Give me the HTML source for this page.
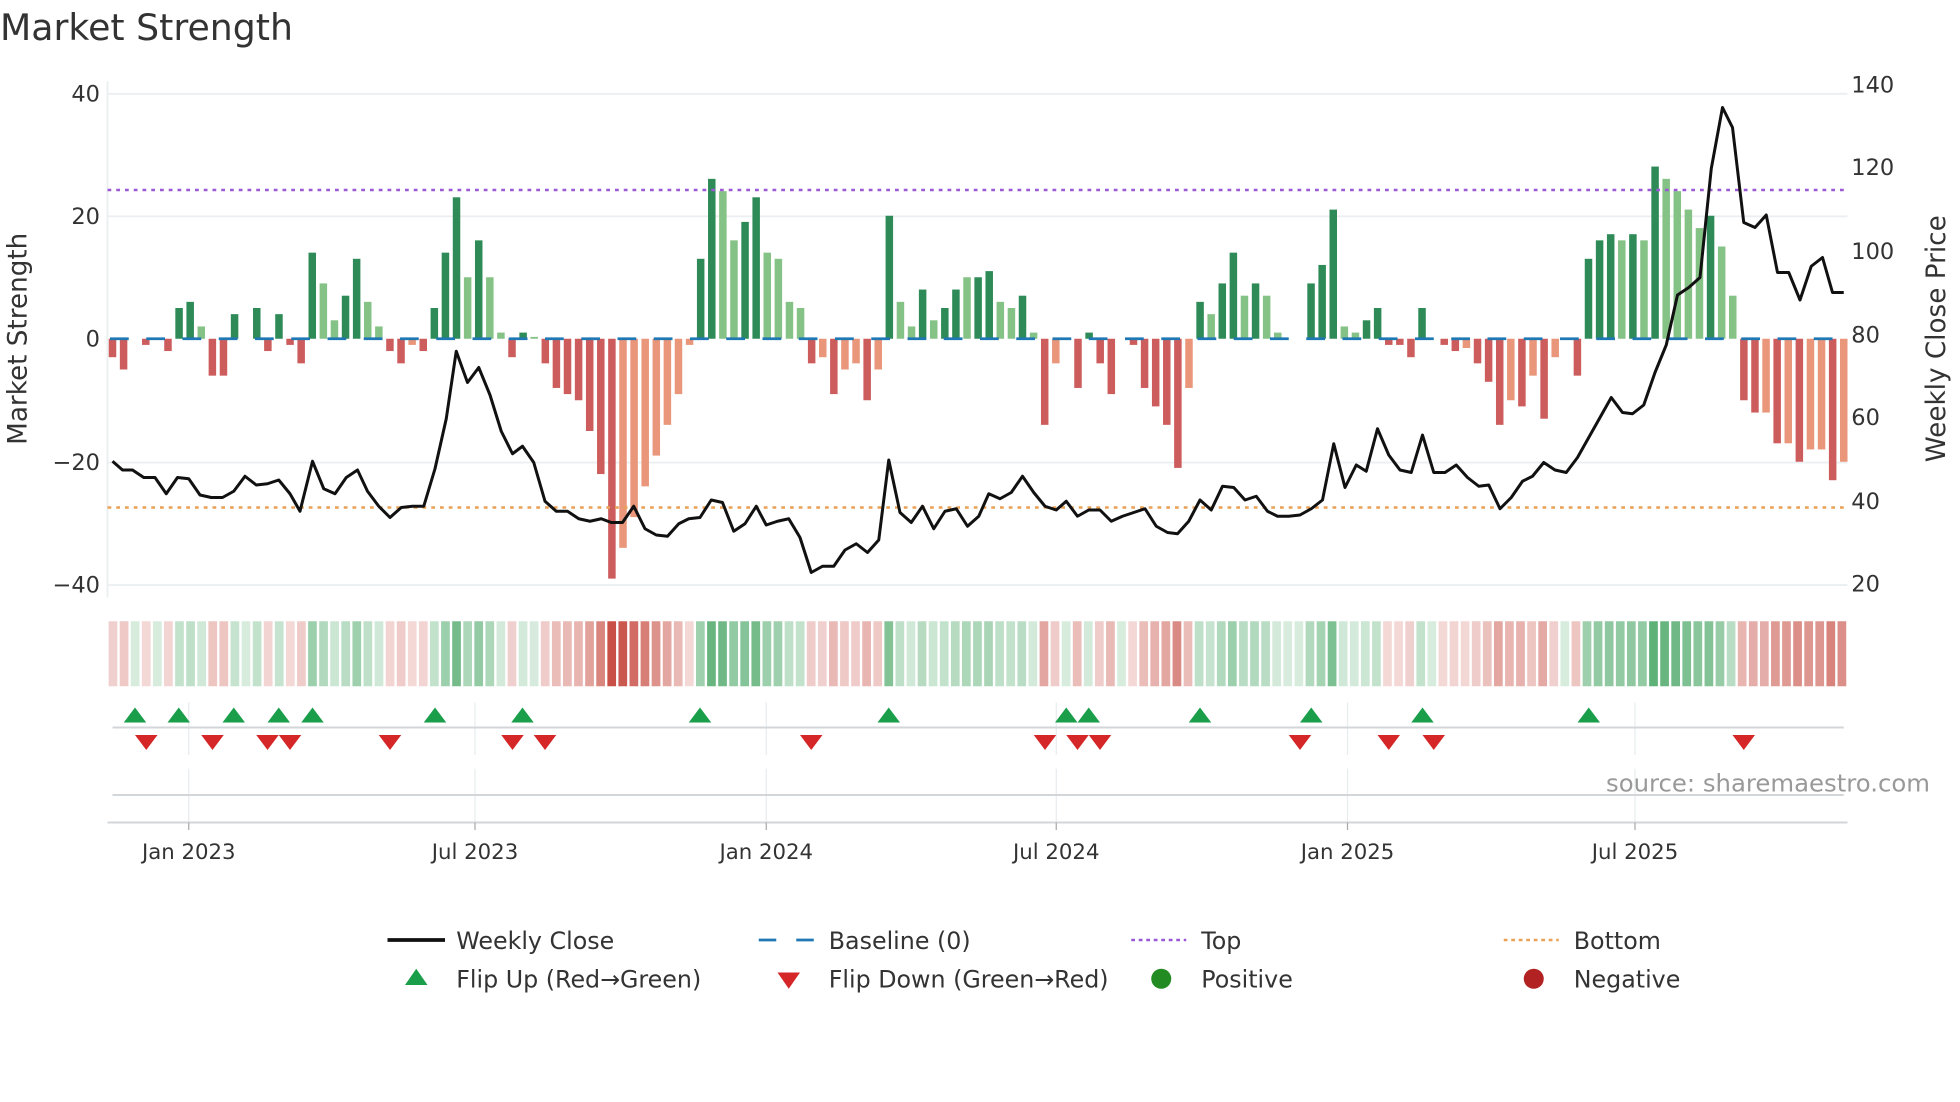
<!DOCTYPE html>
<html><head><meta charset="utf-8"><style>
html,body{margin:0;padding:0;background:#fff;width:1960px;height:1102px;overflow:hidden}
svg text{font-family:"DejaVu Sans","Liberation Sans",sans-serif;fill:#333}
</style></head><body>
<svg id="s" width="1960" height="1102" viewBox="0 0 1568 881.6" xmlns="http://www.w3.org/2000/svg">
<rect width="1568" height="882" fill="#fff"/>
<text x="0" y="32" font-size="29" fill="#333">Market Strength</text>
<g stroke="#eceff1" stroke-width="1.5">
<line x1="86" x2="1478" y1="75" y2="75"/><line x1="86" x2="1478" y1="173" y2="173"/>
<line x1="86" x2="1478" y1="370" y2="370"/><line x1="86" x2="1478" y1="468" y2="468"/>
<line x1="86" x2="86" y1="65" y2="478"/>
</g>
<g font-size="18" text-anchor="end">
<text x="80" y="81">40</text><text x="80" y="179">20</text><text x="80" y="277">0</text>
<text x="80" y="376">−20</text><text x="80" y="474">−40</text>
</g>
<g font-size="18">
<text x="1481" y="74">140</text><text x="1481" y="140">120</text><text x="1481" y="207">100</text>
<text x="1481" y="274">80</text><text x="1481" y="340">60</text><text x="1481" y="407">40</text><text x="1481" y="473">20</text>
</g>
<text transform="translate(21,271) rotate(-90)" font-size="21" text-anchor="middle">Market Strength</text>
<text transform="translate(1556,271) rotate(-90)" font-size="21" text-anchor="middle">Weekly Close Price</text>
<g id="bars"></g>
<line x1="88" x2="1478" y1="271" y2="271" stroke="#1f77b4" stroke-width="2.2" stroke-dasharray="15 14"/>
<line x1="86" x2="1478" y1="152" y2="152" stroke="#9b59d6" stroke-width="2" stroke-dasharray="3 4"/>
<line x1="86" x2="1478" y1="406" y2="406" stroke="#eaa055" stroke-width="2" stroke-dasharray="3 4"/>
<polyline id="price" fill="none" stroke="#111" stroke-width="2.4" stroke-linejoin="round"/>
<g id="strip"></g>
<g stroke="#e8ecef" stroke-width="1">
<line x1="151" x2="151" y1="562" y2="604"/><line x1="380" x2="380" y1="562" y2="604"/><line x1="613" x2="613" y1="562" y2="604"/>
<line x1="845" x2="845" y1="562" y2="604"/><line x1="1078" x2="1078" y1="562" y2="604"/><line x1="1308" x2="1308" y1="562" y2="604"/>
<line x1="151" x2="151" y1="615" y2="658"/><line x1="380" x2="380" y1="615" y2="658"/><line x1="613" x2="613" y1="615" y2="658"/>
<line x1="845" x2="845" y1="615" y2="658"/><line x1="1078" x2="1078" y1="615" y2="658"/><line x1="1308" x2="1308" y1="615" y2="658"/>
</g>
<line x1="90" x2="1475" y1="582" y2="582" stroke="#d3d6d9" stroke-width="1.6"/>
<line x1="90" x2="1475" y1="636" y2="636" stroke="#d3d6d9" stroke-width="1.6"/>
<line x1="86" x2="1478" y1="658" y2="658" stroke="#d3d6d9" stroke-width="1.6"/>
<g stroke="#aaa" stroke-width="1">
<line x1="151" x2="151" y1="658" y2="664"/><line x1="380" x2="380" y1="658" y2="664"/><line x1="613" x2="613" y1="658" y2="664"/>
<line x1="845" x2="845" y1="658" y2="664"/><line x1="1078" x2="1078" y1="658" y2="664"/><line x1="1308" x2="1308" y1="658" y2="664"/>
</g>
<g id="marks"></g>
<text x="1544" y="633" font-size="19.5" text-anchor="end" style="fill:#999">source: sharemaestro.com</text>
<g font-size="17" text-anchor="middle">
<text x="151" y="687">Jan 2023</text><text x="380" y="687">Jul 2023</text><text x="613" y="687">Jan 2024</text>
<text x="845" y="687">Jul 2024</text><text x="1078" y="687">Jan 2025</text><text x="1308" y="687">Jul 2025</text>
</g>
<g font-size="19">
<line x1="310" x2="356" y1="752" y2="752" stroke="#111" stroke-width="3"/><text x="365" y="759">Weekly Close</text>
<line x1="607" x2="651" y1="752" y2="752" stroke="#1f77b4" stroke-width="2.2" stroke-dasharray="14 16"/><text x="663" y="759">Baseline (0)</text>
<line x1="905" x2="949" y1="752" y2="752" stroke="#9b59d6" stroke-width="2" stroke-dasharray="3 3"/><text x="961" y="759">Top</text>
<line x1="1203" x2="1247" y1="752" y2="752" stroke="#eaa055" stroke-width="2" stroke-dasharray="3 3"/><text x="1259" y="759">Bottom</text>
<polygon points="324,788 342,788 333,775" fill="#1a9e4a"/><text x="365" y="790">Flip Up (Red→Green)</text>
<polygon points="622,778 640,778 631,791" fill="#d62728"/><text x="663" y="790">Flip Down (Green→Red)</text>
<circle cx="929" cy="783" r="8" fill="#228b22"/><text x="961" y="790">Positive</text>
<circle cx="1227" cy="783" r="8" fill="#b22222"/><text x="1259" y="790">Negative</text>
</g>
</svg>
<script>
var NS="http://www.w3.org/2000/svg";
function el(t,a,p){var e=document.createElementNS(NS,t);for(var k in a)e.setAttribute(k,a[k]);p.appendChild(e);return e;}
var B=[[-3,'d'],[-5,'d'],[0,'d'],[-1,'d'],[0,'d'],[-2,'d'],[5,'d'],[6,'d'],[2,'l'],[-6,'d'],[-6,'d'],[4,'d'],[0,'d'],[5,'d'],[-2,'d'],[4,'d'],[-1,'d'],[-4,'d'],[14,'d'],[9,'l'],[3,'l'],[7,'d'],[13,'d'],[6,'l'],[2,'l'],[-2,'d'],[-4,'d'],[-1,'l'],[-2,'d'],[5,'d'],[14,'d'],[23,'d'],[10,'l'],[16,'d'],[10,'l'],[1,'l'],[-3,'d'],[1,'d'],[0.3,'l'],[-4,'d'],[-8,'d'],[-9,'d'],[-10,'d'],[-15,'d'],[-22,'d'],[-39,'d'],[-34,'l'],[-29,'l'],[-24,'l'],[-19,'l'],[-14,'l'],[-9,'l'],[-1,'l'],[13,'d'],[26,'d'],[24,'l'],[16,'l'],[19,'d'],[23,'d'],[14,'l'],[13,'l'],[6,'l'],[5,'l'],[-4,'d'],[-3,'l'],[-9,'d'],[-5,'l'],[-4,'l'],[-10,'d'],[-5,'l'],[20,'d'],[6,'l'],[2,'l'],[8,'d'],[3,'l'],[5,'d'],[8,'d'],[10,'l'],[10,'d'],[11,'d'],[6,'l'],[5,'l'],[7,'d'],[1,'l'],[-14,'d'],[-4,'l'],[0,'d'],[-8,'d'],[1,'d'],[-4,'d'],[-9,'d'],[0,'d'],[-1,'d'],[-8,'d'],[-11,'d'],[-14,'d'],[-21,'d'],[-8,'l'],[6,'d'],[4,'l'],[9,'d'],[14,'d'],[7,'l'],[9,'d'],[7,'l'],[1,'l'],[0,'d'],[0,'d'],[9,'d'],[12,'d'],[21,'d'],[2,'l'],[1,'l'],[3,'d'],[5,'d'],[-1,'d'],[-1,'d'],[-3,'d'],[5,'d'],[0,'d'],[-1,'d'],[-2,'d'],[-1.5,'l'],[-4,'d'],[-7,'d'],[-14,'d'],[-10,'l'],[-11,'d'],[-6,'l'],[-13,'d'],[-3,'l'],[0,'d'],[-6,'d'],[13,'d'],[16,'d'],[17,'d'],[16,'l'],[17,'d'],[16,'l'],[28,'d'],[26,'l'],[24,'l'],[21,'l'],[18,'l'],[20,'d'],[15,'l'],[7,'l'],[-10,'d'],[-12,'d'],[-12,'l'],[-17,'d'],[-17,'l'],[-20,'d'],[-18,'l'],[-18,'l'],[-23,'d'],[-20,'l']];
var n=B.length,x0=90,x1=1475,dx=(x1-x0)/(n-1);
var g=document.getElementById('bars'),st=document.getElementById('strip');
var sw=(1478-86)/n;
for(var i=0;i<n;i++){
 var v=B[i][0],t=B[i][1],x=x0+i*dx,y0=271,y=271-4.92*v;
 var c=v>=0?(t=='d'?'#2e8b57':'#85c285'):(t=='d'?'#cd5c5c':'#e9967a');
 if(Math.abs(v)>0.1) el('rect',{x:x-3,y:Math.min(y,y0),width:6,height:Math.abs(y-y0),fill:c},g);
 var sc=v>=0?'rgba(60,160,90,'+(0.2+Math.abs(v)/45)+')':'rgba(200,80,70,'+(0.2+Math.abs(v)/45)+')';
 el('rect',{x:86+i*sw+0.9,y:497,width:sw-1.9,height:52,fill:sc},st);
}
var P=[[90,369],[98,376],[106,376],[115,382],[124,382],[133,395],[142,382],[151,383],[160,396],[169,398],[178,398],[187,393],[196,381],[205,388],[214,387],[223,384],[232,395],[240,409],[250,369],[259,391],[268,395],[277,382],[286,376],[294,393],[303,405],[312,414],[321,406],[330,405],[339,405],[348,375],[357,335],[365,281],[374,306],[383,294],[392,316],[401,345],[410,363],[418,357],[427,370],[436,401],[445,409],[454,409],[463,415],[472,417],[481,415],[489,418],[498,418],[507,405],[516,423],[525,428],[534,429],[543,419],[551,415],[560,414],[569,400],[578,402],[587,425],[596,419],[605,405],[613,420],[622,417],[631,415],[640,430],[649,458],[658,453],[667,453],[676,440],[685,435],[694,442],[703,432],[711,368],[720,410],[729,418],[738,405],[747,423],[756,409],[765,407],[774,421],[783,413],[791,395],[800,399],[809,394],[818,381],[827,394],[836,405],[845,408],[853,401],[862,413],[871,408],[880,408],[889,417],[898,413],[907,410],[916,407],[925,421],[934,426],[942,427],[951,417],[960,400],[969,408],[978,389],[987,390],[996,400],[1005,397],[1014,409],[1022,413],[1031,413],[1040,412],[1049,407],[1058,400],[1067,355],[1076,390],[1085,372],[1093,377],[1102,343],[1111,364],[1120,376],[1129,378],[1138,348],[1147,378],[1156,378],[1165,372],[1174,382],[1183,389],[1191,388],[1200,407],[1209,398],[1218,385],[1226,381],[1235,370],[1244,376],[1253,378],[1262,366],[1271,350],[1280,334],[1289,318],[1298,330],[1306,331],[1315,324],[1324,298],[1333,276],[1342,236],[1351,230],[1360,222],[1369,135],[1378,86],[1386,102],[1395,178],[1404,182],[1413,172],[1422,218],[1431,218],[1440,240],[1449,213],[1458,206],[1466,234],[1475,234]];
document.getElementById('price').setAttribute('points',P.map(function(p){return p.join(',')}).join(' '));
var m=document.getElementById('marks');
[108,143,187,223,250,348,418,560,711,853,871,960,1049,1138,1271].forEach(function(x){el('polygon',{points:(x-9)+',578 '+(x+9)+',578 '+x+',566',fill:'#1a9e4a'},m);});
[117,170,214,232,312,410,436,649,836,862,880,1040,1111,1147,1395].forEach(function(x){el('polygon',{points:(x-9)+',588 '+(x+9)+',588 '+x+',600',fill:'#d62728'},m);});
</script>
</body></html>
